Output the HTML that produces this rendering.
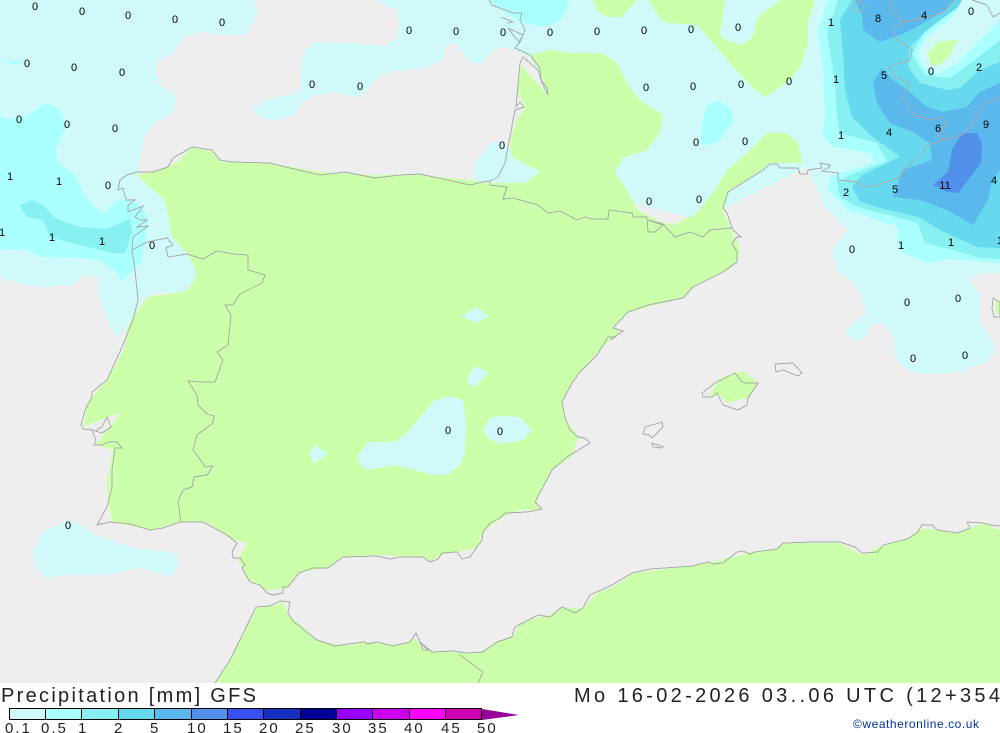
<!DOCTYPE html>
<html><head><meta charset="utf-8"><style>
html,body{margin:0;padding:0;background:#fff;width:1000px;height:733px;overflow:hidden}
svg{display:block}
.l text{font:11px "Liberation Sans",sans-serif;text-anchor:middle;fill:#000}
.c{fill:none;stroke:#aaa;stroke-width:1}
.t{font-family:"Liberation Sans",sans-serif;fill:#222}
</style></head><body>
<svg width="1000" height="733" viewBox="0 0 1000 733" xmlns="http://www.w3.org/2000/svg">
<rect width="1000" height="683" fill="#eeeeee"/>
<g fill="#d0fafa">
<polygon points="0,0 255,0 257,15 245,35 222,35 200,32 183,38 172,55 158,60 156,72 160,85 175,95 177,105 170,115 155,123 145,135 142,150 137,173 137,177 147,185 163,198 168,213 172,237 187,253 195,268 195,278 185,292 157,293 143,298 132,320 117,338 107,320 98,293 98,277 83,276 72,285 40,287 17,283 2,277 0,277"/>
<polygon points="375,0 397,10 400,25 397,38 385,46 350,43 315,42 305,50 301,65 300,85 298,93 265,100 252,109 262,118 275,121 293,115 302,103 315,95 335,92 360,98 378,77 390,72 425,68 442,60 447,45 455,42 468,60 480,65 493,50 503,47 515,50 530,57 620,200 700,220 805,168 808,170 825,207 848,230 832,250 837,270 857,287 865,307 865,315 852,325 845,335 860,342 868,333 872,324 883,323 895,340 894,355 900,365 915,373 933,374 960,372 987,362 995,352 993,340 980,323 980,295 968,278 983,273 1000,273 1000,0"/>
<polygon points="502,141 490,143 477,160 473,173 478,182 525,183 540,172 510,150"/>
<polygon points="70,520 97,535 133,548 175,553 179,562 172,577 140,568 107,575 70,575 45,577 35,565 33,552 42,532"/>
</g>
<g fill="#aaffff">
<polygon points="3,60 25,61 14,65"/>
<polygon points="0,116 10,119 25,117 45,103 58,108 65,120 65,130 55,150 58,162 73,173 83,192 95,208 105,213 115,202 127,199 140,205 148,218 145,243 140,263 122,281 117,273 100,260 77,258 43,257 23,249 0,250"/>
<polygon points="490,0 498,7 520,22 542,27 558,22 567,10 569,0"/>
<polygon points="707,105 718,100 732,110 733,122 720,140 708,146 700,142 703,120"/>
<polygon points="828,0 818,30 823,70 825,117 822,135 833,147 870,153 875,162 830,177 828,190 847,210 898,227 897,242 903,253 928,263 950,259 1000,263 1000,0"/>
</g>
<polygon fill="#88f0f0" points="20,205 32,200 43,205 55,218 80,227 107,229 130,219 132,233 125,253 113,253 80,245 50,237 43,220 27,217"/>
<polygon fill="#88f0f0" points="838,0 827,33 835,83 837,117 840,133 877,143 887,161 850,175 837,182 840,197 857,207 918,223 925,243 953,250 980,258 1000,259 1000,40 975,60 950,78 925,75 912,55 925,30 955,5 958,0"/>
<polygon fill="#66d9ee" points="852,0 840,20 843,53 845,90 852,117 870,135 900,157 862,175 852,187 860,202 880,208 918,217 940,230 957,238 977,247 1000,248 1000,62 980,70 960,88 947,90 920,83 908,67 910,47 927,30 957,8 965,0"/>
<polygon fill="#5ab8ec" points="855,0 862,15 863,30 880,42 905,33 925,22 945,10 955,0"/>
<polygon fill="#5ab8ec" points="882,68 873,83 877,103 890,123 913,132 930,143 932,160 903,170 893,197 920,200 947,210 973,225 988,200 992,180 1000,170 1000,83 980,92 967,107 943,112 927,107 910,92 893,80"/>
<polygon fill="#5090e8" points="962,133 977,133 982,143 981,163 958,193 947,192 933,185 948,172 952,150"/>
<polygon fill="#d0fafa" points="962,0 1000,0 1000,20 980,40 957,63 937,74 923,67 918,53 927,37 953,17"/>
<g fill="#ccffaa">
<polygon points="780,0 815,0 808,23 808,43 800,68 787,83 765,97 753,88 733,67 713,43 697,25 667,23 660,18 648,0 725,0 720,33 722,38 740,45 752,38 758,17"/>
<polygon points="593,0 597,10 607,17 622,17 637,0"/>
<polygon points="928,53 938,42 958,39 950,55 940,65 930,65"/>
<polygon points="530,55 550,50 570,53 603,53 617,63 627,83 640,100 663,115 660,133 647,150 623,158 615,173 627,190 637,210 657,220 673,225 697,213 717,187 727,170 747,153 767,133 787,133 798,143 803,163 770,163 747,180 730,190 723,210 730,227 735,240 738,242 740,252 737,262 728,270 697,285 687,293 683,298 630,312 620,320 613,328 620,332 610,340 600,350 580,372 572,382 562,402 565,418 578,437 572,457 552,470 537,500 540,510 520,510 503,517 483,532 477,548 467,550 440,555 430,562 422,557 377,555 343,557 327,568 300,572 288,588 272,590 265,590 257,583 247,580 242,567 238,560 247,543 233,540 220,532 207,522 183,522 150,530 113,522 108,503 107,480 113,450 95,445 122,412 83,427 87,403 107,380 120,357 125,347 128,327 133,317 148,297 177,293 188,290 196,277 195,268 187,253 172,237 168,213 163,198 147,185 137,175 167,168 177,162 192,147 213,152 222,162 270,163 320,172 370,175 420,175 470,180 490,183 525,183 540,172 512,157 510,143 515,123 525,107 517,88 521,65 548,95 540,72"/>
<polygon points="215,683 230,660 257,608 278,605 282,600 289,615 317,640 343,646 367,642 400,645 415,638 422,648 433,652 457,652 477,654 500,640 513,637 522,622 540,617 550,615 562,607 583,609 597,593 617,585 633,573 667,569 693,566 710,562 733,557 753,552 777,549 783,543 840,543 862,555 883,545 907,539 920,529 933,529 953,533 967,530 983,523 1000,530 1000,683"/>
<polygon points="709,396 720,378 743,371 757,382 750,397 727,403 720,395"/>
<polygon points="995,300 1000,303 1000,315 996,312"/>
</g>
<g fill="#d0fafa">
<polygon points="462,316 476,307 489,316 476,323"/>
<polygon points="468,377 475,366 489,373 475,387 468,383"/>
<polygon points="358,455 368,442 395,442 407,433 433,402 448,396 463,400 466,423 465,453 460,465 447,475 433,475 395,465 368,470 360,465"/>
<polygon points="483,429 490,418 500,416 520,417 532,430 523,440 500,444 488,438"/>
<polygon points="309,454 315,445 328,454 314,463"/>
</g>
<g class="c" shape-rendering="crispEdges">
<polyline points="137,172 127,175 120,180 118,190 123,188 126,200 135,200 128,205 128,212 143,206 135,217 140,220 147,220 137,227 148,226 133,237 132,250 135,270 138,300 133,320 122,347 107,380 92,392 92,397 85,410 81,425 83,429 92,430 96,440 94,445 102,445 108,442 117,442 122,448 115,448 112,470 112,487 107,507 97,525 110,522 130,524 150,530 163,528 180,522 203,522 227,535 237,543 232,552 233,558 240,558 245,565 242,568 250,582 260,585 267,593 273,595 283,593 283,587 288,587 299,573 313,568 328,568 343,557 377,556 390,559 400,557 423,557 430,562 438,559 442,553 457,552 462,559 470,557 482,540 483,532 490,523 500,518 505,513 528,512 542,509 535,502 552,470 567,457 590,443 585,438 578,437 570,430 565,418 562,402 572,383 580,372 597,355 608,337 615,337 610,340 623,331 613,328 628,312 648,305 683,298 693,287 723,272 737,262 737,252 732,243 737,237 741,237 733,230 727,213 723,208 728,192 747,180 763,170 770,164 777,164 780,168 798,168 800,174 807,174 808,170 822,168 820,163 830,165 828,168 822,171 838,173 838,180 858,182 863,187 878,185 900,177 902,172 920,155 928,145 943,140 962,135 972,125 983,105 1000,97"/>
<polyline points="137,172 153,172 168,167 173,158 192,147 212,150 220,160 232,162 270,163 290,168 320,175 345,172 375,178 400,175 420,174 470,185 482,182 490,181 498,177 505,163 515,110 524,107 520,102 516,107 520,63 523,57 538,70 542,83 548,95 547,88 541,80 540,68 530,55 515,48 520,42 525,30 520,20 522,13 513,13 492,5 489,0"/>
<polyline points="501,17 513,22 507,23"/>
<polyline points="508,28 523,35 519,42 513,35 508,28"/>
<polyline points="490,181 490,185 507,187 503,199 513,198 538,205 548,213 560,211 577,220 585,217 592,219 608,219 609,210 632,213 633,217 647,217 648,232 655,232 663,225 648,220 663,224 675,237 690,232 703,237 710,230 732,228 733,230"/>
<polyline points="147,242 167,238 173,245 166,248 168,257 187,254 203,259 217,251 233,254 248,255 248,270 265,275 262,283 240,294 233,305 225,305 231,315 228,345 217,352 223,360 215,382 202,382 188,381 197,395 198,405 207,414 214,416 213,423 197,435 193,450 202,462 205,467 213,466 207,475 194,477 192,487 183,490 178,501 181,522"/>
<polyline points="132,250 147,242"/>
<polyline points="92,430 102,433 111,427 107,417 102,427 95,431"/>
<polyline points="215,683 230,660 256,607 270,606 280,601 290,602 288,613 293,621 317,640 335,646 355,643 365,642 367,644 377,642 393,646 410,642 416,633 420,642 428,650 423,650 420,642 432,652 453,651 467,653 483,652 497,642 512,637 515,627 538,615 550,617 562,607 575,613 583,608 590,595 612,585 632,573 650,569 693,566 708,562 713,564 723,563 737,552 743,551 750,554 755,552 777,549 783,543 813,542 840,542 855,547 862,553 878,552 883,545 907,539 917,533 922,525 932,525 937,530 958,533 970,528 967,522 983,523 990,525 1000,526"/>
<polyline points="460,655 483,672 478,683"/>
<polygon points="702,393 715,383 735,373 742,382 747,383 758,383 748,398 747,405 738,410 723,405 717,393 712,397 703,397"/>
<polygon points="775,364 793,363 802,373 798,376 783,370 776,372"/>
<polygon points="645,427 662,422 663,427 652,438 649,435 643,434"/>
<polygon points="652,443 663,447 662,448 653,447"/>
<polygon points="993,298 1000,302 1000,317 994,317 992,308"/>
<polyline points="890,0 892,10 903,22 893,28 895,37 912,50 910,60 888,67 895,77 910,83 903,98 913,115 933,120 943,117 947,125 938,133 943,140"/>
<polyline points="903,22 923,18 943,13 953,0"/>
<polyline points="858,0 865,5 860,12 852,10 857,0"/>
<polyline points="972,0 987,5 993,17 1000,13"/>
</g>
<g class="l">
<text x="35" y="10">0</text><text x="82" y="15">0</text><text x="128" y="19">0</text><text x="175" y="23">0</text><text x="222" y="26">0</text><text x="27" y="67">0</text><text x="74" y="71">0</text><text x="122" y="76">0</text><text x="19" y="123">0</text><text x="67" y="128">0</text><text x="115" y="132">0</text><text x="312" y="88">0</text><text x="360" y="90">0</text><text x="409" y="34">0</text><text x="456" y="35">0</text><text x="503" y="36">0</text><text x="550" y="36">0</text><text x="597" y="35">0</text><text x="644" y="34">0</text><text x="691" y="33">0</text><text x="738" y="31">0</text><text x="646" y="91">0</text><text x="693" y="90">0</text><text x="741" y="88">0</text><text x="789" y="85">0</text><text x="502" y="149">0</text><text x="696" y="146">0</text><text x="745" y="145">0</text><text x="649" y="205">0</text><text x="699" y="203">0</text><text x="108" y="189">0</text><text x="152" y="249">0</text><text x="448" y="434">0</text><text x="500" y="435">0</text><text x="68" y="529">0</text><text x="852" y="253">0</text><text x="907" y="306">0</text><text x="958" y="302">0</text><text x="913" y="362">0</text><text x="965" y="359">0</text><text x="971" y="15">0</text><text x="931" y="75">0</text>
<text x="10" y="180">1</text><text x="59" y="185">1</text><text x="2" y="236">1</text><text x="52" y="241">1</text><text x="102" y="245">1</text><text x="831" y="26">1</text><text x="836" y="83">1</text><text x="841" y="139">1</text><text x="901" y="249">1</text><text x="951" y="246">1</text><text x="1000" y="244">1</text>
<text x="846" y="196">2</text><text x="979" y="71">2</text><text x="924" y="19">4</text><text x="889" y="136">4</text><text x="994" y="184">4</text><text x="884" y="79">5</text><text x="895" y="193">5</text><text x="938" y="132">6</text><text x="878" y="22">8</text><text x="986" y="128">9</text><text x="945" y="189">11</text>
</g>
<text class="t" x="1" y="702" font-size="20" textLength="255" lengthAdjust="spacing">Precipitation [mm] GFS</text>
<text class="t" x="574" y="702" font-size="20" textLength="426" lengthAdjust="spacing">Mo 16-02-2026 03..06 UTC (12+354</text>
<g stroke="#000" stroke-width="1" shape-rendering="crispEdges">
<rect x="9.5" y="708.5" width="36" height="11" fill="#d0fafa"/><rect x="45.5" y="708.5" width="36" height="11" fill="#aaffff"/><rect x="81.5" y="708.5" width="37" height="11" fill="#88f0f0"/><rect x="118.5" y="708.5" width="36" height="11" fill="#66d9ee"/><rect x="154.5" y="708.5" width="37" height="11" fill="#5ab8ec"/><rect x="191.5" y="708.5" width="36" height="11" fill="#5090e8"/><rect x="227.5" y="708.5" width="36" height="11" fill="#3850f0"/><rect x="263.5" y="708.5" width="37" height="11" fill="#1830c0"/><rect x="300.5" y="708.5" width="36" height="11" fill="#000099"/><rect x="336.5" y="708.5" width="36" height="11" fill="#9900ff"/><rect x="372.5" y="708.5" width="37" height="11" fill="#cc00ee"/><rect x="409.5" y="708.5" width="36" height="11" fill="#ff00ff"/><rect x="445.5" y="708.5" width="36" height="11" fill="#cc00b0"/>
</g>
<polygon points="482,709 519,715 482,720" fill="#990099"/>
<g class="t" font-size="15" letter-spacing="2">
<text x="5" y="733">0.1</text><text x="41" y="733">0.5</text><text x="78" y="733">1</text><text x="114" y="733">2</text><text x="150" y="733">5</text><text x="187" y="733">10</text><text x="223" y="733">15</text><text x="259" y="733">20</text><text x="295" y="733">25</text><text x="332" y="733">30</text><text x="368" y="733">35</text><text x="404" y="733">40</text><text x="441" y="733">45</text><text x="477" y="733">50</text>
</g>
<text x="853" y="728" font-family="'Liberation Sans',sans-serif" font-size="12" fill="#003399" textLength="126" lengthAdjust="spacing">©weatheronline.co.uk</text>
</svg>
</body></html>
